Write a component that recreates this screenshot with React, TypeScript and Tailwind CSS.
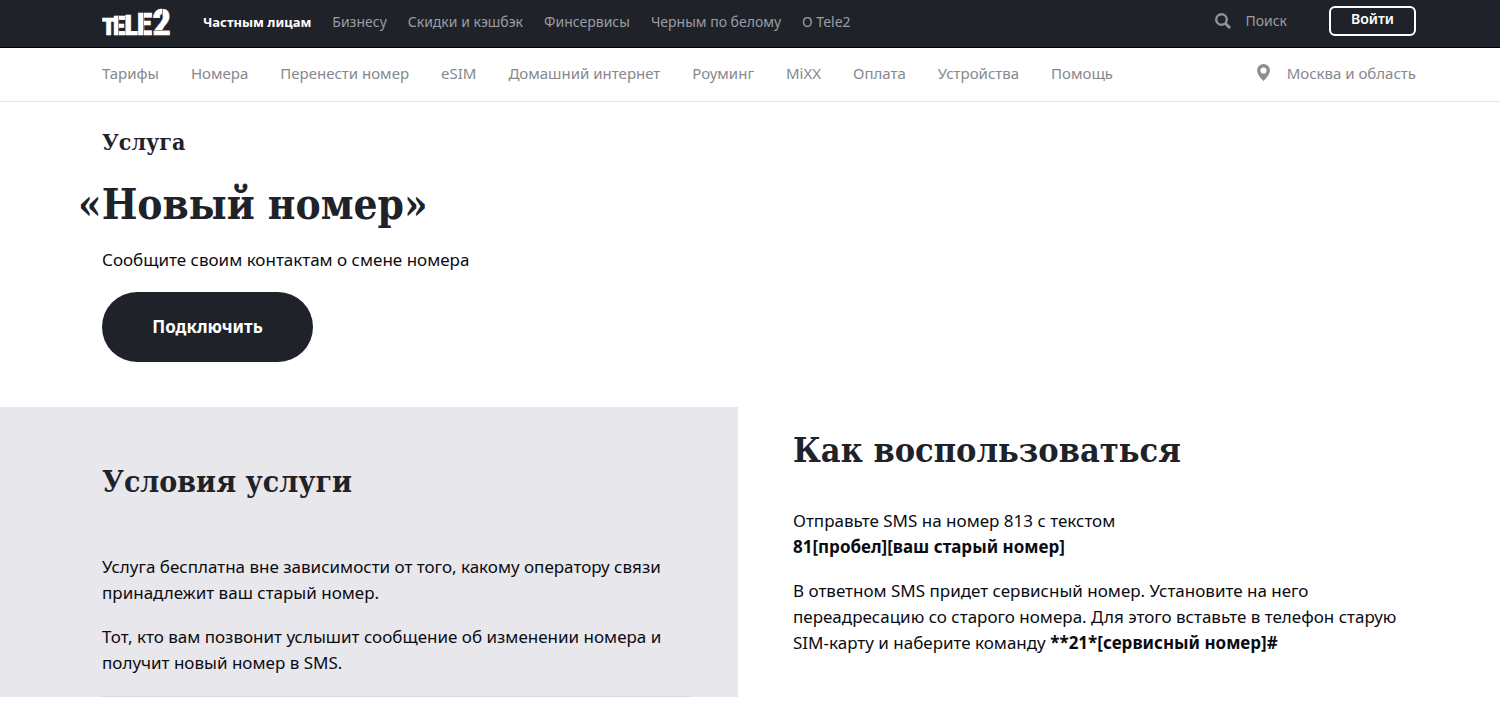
const topLinks = ['Бизнесу', 'Скидки и кэшбэк', 'Финсервисы', 'Черным по белому', 'О Tele2'];

const menuLinks = [
  'Тарифы',
  'Номера',
  'Перенести номер',
  'eSIM',
  'Домашний интернет',
  'Роуминг',
  'MiXX',
  'Оплата',
  'Устройства',
  'Помощь',
];

function Logo() {
  return (
    <svg width="72" height="44" viewBox="0 0 72 44" role="img" aria-label="Tele2">
      <text
        y="33"
        fill="#fff"
        stroke="#fff"
        strokeWidth=".7"
        fontFamily="'Roboto Condensed', Roboto, sans-serif"
        fontWeight="900"
        fontSize="24"
      >
        <tspan x="0">T</tspan>
        <tspan x="11" fontSize="25">E</tspan>
        <tspan x="22.500" fontSize="28">L</tspan>
        <tspan x="35" fontSize="31">E</tspan>
        <tspan x="50.500" fontSize="36">2</tspan>
      </text>
      {/* stencil cuts */}
      <path d="M16.500 14v20M41.500 10v24M60.500 6v7M51 28.500h19" stroke="#1f2229" strokeWidth=".5" />
    </svg>
  );
}

function SearchIcon() {
  return (
    <svg width="16" height="16" viewBox="0 0 16 16" fill="none" stroke="#8e9399" aria-hidden="true">
      <circle cx="6.500" cy="6.500" r="5.300" strokeWidth="2.400" />
      <path d="M10.500 10.500l4.500 4.500" strokeWidth="3" />
    </svg>
  );
}

function PinIcon() {
  return (
    <svg width="13" height="17" viewBox="0 0 12 16" fill="#8b9096" aria-hidden="true">
      <path
        fillRule="evenodd"
        d="M6 0a6 6 0 0 0-6 6c0 3.500 3.500 7.500 6 10 2.500-2.500 6-6.500 6-10a6 6 0 0 0-6-6zm0 3.200a2.900 2.900 0 1 1 0 5.800 2.900 2.900 0 0 1 0-5.800z"
      />
    </svg>
  );
}

function Header() {
  return (
    <header>
      <div className="flex h-12 items-center border-b border-black bg-[#1f2229] pr-[84px] pl-[102px] text-[14px] leading-5 text-[#9a9da2]">
        <a href="#">
          <Logo />
        </a>
        <nav className="ml-[29px] flex gap-[21px] pb-1">
          <a href="#" className="text-[13px] font-bold text-white">
            Частным лицам
          </a>
          {topLinks.map((label) => (
            <a key={label} href="#">
              {label}
            </a>
          ))}
        </nav>
        <div className="ml-auto flex items-center gap-[42px] pb-[5px]">
          <a href="#" className="flex items-center gap-[14px]">
            <SearchIcon />
            Поиск
          </a>
          <button
            type="button"
            className="h-[30px] w-[87px] rounded-md border-2 border-white pb-1 font-semibold text-white"
          >
            Войти
          </button>
        </div>
      </div>

      <div className="flex h-[54px] items-center border-b border-[#e6e6e8] pr-[84px] pb-1 pl-[102px] text-[15px] leading-6 text-[#85888d]">
        <nav className="flex gap-8">
          {menuLinks.map((label) => (
            <a key={label} href="#">
              {label}
            </a>
          ))}
        </nav>
        <a href="#" className="ml-auto flex items-center gap-[17px]">
          <PinIcon />
          Москва и область
        </a>
      </div>
    </header>
  );
}

function Hero() {
  return (
    <section className="pt-[22px] pb-[45px] pl-[102px]">
      <h1 className="font-['DejaVu_Serif_Condensed','DejaVu_Serif',serif] font-bold text-[#1f2229]">
        <span className="block text-[23px] leading-9">Услуга</span>
        <span className="mt-[15px] -ml-6 block text-[42px] leading-[60px]">«Новый номер»</span>
      </h1>
      <p className="mt-3 leading-[26px]">Сообщите своим контактам о смене номера</p>
      <button
        type="button"
        className="mt-[19px] h-[70px] w-[211px] rounded-full bg-[#1f2229] font-bold text-white"
      >
        Подключить
      </button>
    </section>
  );
}

function Details() {
  return (
    <div className="flex items-start leading-[26px]">
      <section className="w-[49.2%] bg-[#e8e7ec] pt-[49px] pr-12 pl-[102px]">
        <h2 className="font-['DejaVu_Serif_Condensed','DejaVu_Serif',serif] text-[30px] leading-[52px] font-bold text-[#1f2229]">
          Условия услуги
        </h2>
        <div className="mt-[46px] space-y-[18px] border-b border-[#d6dadb] pb-5">
          <p>Услуга бесплатна вне зависимости от того, какому оператору связи принадлежит ваш старый номер.</p>
          <p>Тот, кто вам позвонит услышит сообщение об изменении номера и получит новый номер в SMS.</p>
        </div>
      </section>

      <section className="flex-1 pt-[17px] pr-[84px] pl-[55px]">
        <h2 className="font-['DejaVu_Serif_Condensed','DejaVu_Serif',serif] text-[34px] leading-[52px] font-bold text-[#1f2229]">
          Как воспользоваться
        </h2>
        <div className="mt-8 space-y-[18px]">
          <p>
            Отправьте SMS на номер 813 с текстом
            <br />
            <b>81[пробел][ваш старый номер]</b>
          </p>
          <p>
            В ответном SMS придет сервисный номер. Установите на него переадресацию со старого номера. Для этого
            вставьте в телефон старую SIM-карту и наберите команду <b>**21*[сервисный номер]#</b>
          </p>
        </div>
      </section>
    </div>
  );
}

export default function App() {
  return (
    <div className="min-h-screen bg-white font-['Noto_Sans',sans-serif] text-[17px] text-[#0b0c12]">
      <Header />
      <main>
        <Hero />
        <Details />
      </main>
    </div>
  );
}
